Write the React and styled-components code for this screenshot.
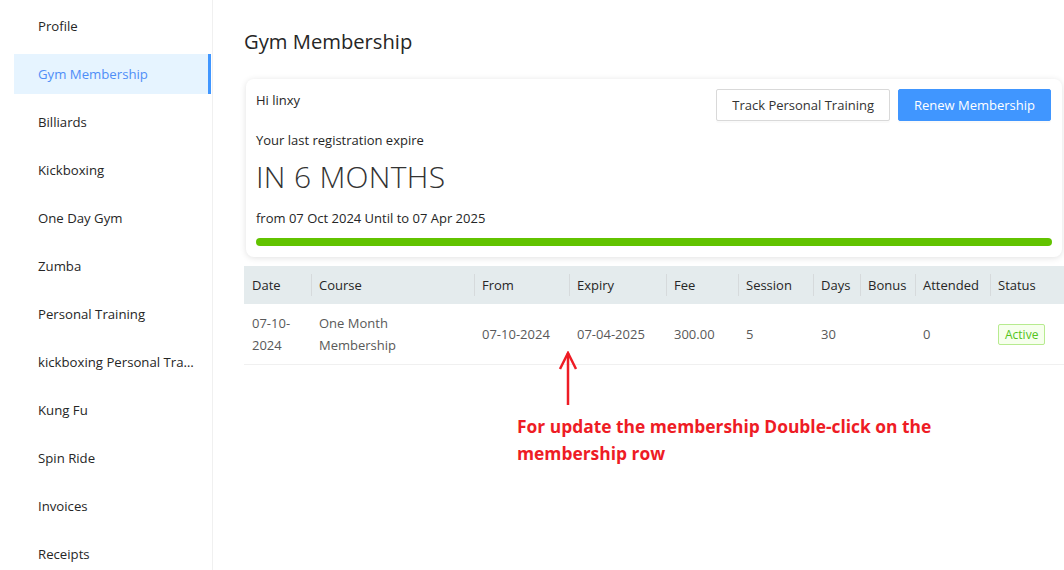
import React from "react";
import styled, { createGlobalStyle } from "styled-components";

const GlobalStyle = createGlobalStyle`
  html, body {
    margin: 0;
    padding: 0;
    background: #fff;
    font-family: "Open Sans", "Noto Sans", sans-serif;
    color: #262626;
  }
`;

const Page = styled.div`
  display: flex;
  width: 1064px;
  height: 570px;
  overflow: hidden;
`;

const Sidebar = styled.nav`
  width: 213px;
  flex-shrink: 0;
  border-right: 1px solid #f0f0f0;
  padding: 6px 0 0 14px;
  box-sizing: border-box;
  display: flex;
  flex-direction: column;
  gap: 8px;
`;

const MenuItem = styled.div`
  flex-shrink: 0;
  height: 40px;
  line-height: 40px;
  padding: 0 14px 0 24px;
  font-size: 13.2px;
  white-space: nowrap;
  overflow: hidden;
  text-overflow: ellipsis;
  color: ${(p) => (p.$active ? "#4f8ef7" : "#262626")};
  background: ${(p) => (p.$active ? "#e6f4ff" : "transparent")};
  border-right: 3px solid ${(p) => (p.$active ? "#4096ff" : "transparent")};
  margin-right: 1px;
`;

const Content = styled.main`
  flex: 1;
  padding: 27px 0 0 31px;
  min-width: 0;
`;

const Title = styled.h1`
  margin: 0 0 24px;
  font-size: 20.2px;
  font-weight: 400;
  color: #262626;
`;

const Card = styled.section`
  margin: 0 2px 9px 2px;
  padding: 10px 10px 11px 10px;
  border-radius: 8px;
  box-shadow: 0 1px 6px rgba(0, 0, 0, 0.12);
  display: flex;
  flex-direction: column;
`;

const CardTop = styled.div`
  display: flex;
  justify-content: space-between;
  align-items: flex-start;
`;

const Greeting = styled.div`
  font-size: 13px;
  padding-top: 2px;
`;

const Actions = styled.div`
  display: flex;
  gap: 8px;
  margin-right: 1px;
`;

const Button = styled.button`
  height: 32px;
  padding: 0 15px;
  font-family: inherit;
  font-size: 13px;
  border-radius: 2px;
  border: 1px solid ${(p) => (p.$primary ? "#4096ff" : "#d9d9d9")};
  background: ${(p) => (p.$primary ? "#4096ff" : "#fff")};
  color: ${(p) => (p.$primary ? "#fff" : "#333")};
  box-shadow: 0 2px 0 rgba(0, 0, 0, 0.02);
`;

const Line = styled.div`
  font-size: 13px;
  margin-top: ${(p) => p.$top || 0}px;
`;

const Big = styled.div`
  font-size: 30px;
  font-weight: 300;
  letter-spacing: 0.3px;
  margin-top: 7px;
  color: #333;
`;

const Progress = styled.div`
  height: 8px;
  border-radius: 4px;
  background: #62c300;
  margin-top: 11px;
`;

const Table = styled.table`
  border-collapse: collapse;
  table-layout: fixed;
  width: 830px;
  font-size: 13px;
`;

const Th = styled.th`
  position: relative;
  background: #e4ebed;
  height: 38px;
  padding: 0 8px;
  text-align: left;
  font-weight: 500;
  color: #262626;
  &:not(:first-child)::before {
    content: "";
    position: absolute;
    left: 0;
    top: 8px;
    height: 22px;
    width: 1px;
    background: #d6dadc;
  }
`;

const Td = styled.td`
  padding: 8px 8px;
  line-height: 22px;
  color: #595959;
  border-bottom: 1px solid #f0f0f0;
  vertical-align: middle;
`;

const Wrap = styled.div`
  max-width: ${(p) => p.$max}px;
`;

const Tag = styled.span`
  display: inline-block;
  padding: 0 6px;
  line-height: 19px;
  font-size: 12px;
  border: 1px solid #b7eb8f;
  background: #f6ffed;
  color: #52c41a;
  border-radius: 2px;
`;

const Hint = styled.div`
  display: flex;
  flex-direction: column;
  margin-left: 273px;
`;

const Arrow = styled.svg`
  margin-left: 41px;
  margin-top: -14px;
`;

const HintText = styled.p`
  margin: 8px 0 0;
  width: 450px;
  color: #ee1c25;
  font-weight: 700;
  font-size: 17.4px;
  line-height: 27px;
`;

const menu = [
  "Profile",
  "Gym Membership",
  "Billiards",
  "Kickboxing",
  "One Day Gym",
  "Zumba",
  "Personal Training",
  "kickboxing Personal Training",
  "Kung Fu",
  "Spin Ride",
  "Invoices",
  "Receipts",
];

const columns = [
  ["Date", 67],
  ["Course", 163],
  ["From", 95],
  ["Expiry", 97],
  ["Fee", 72],
  ["Session", 75],
  ["Days", 47],
  ["Bonus", 55],
  ["Attended", 75],
  ["Status", 84],
];

export default function App() {
  return (
    <Page>
      <GlobalStyle />
      <Sidebar>
        {menu.map((m) => (
          <MenuItem key={m} $active={m === "Gym Membership"}>
            {m}
          </MenuItem>
        ))}
      </Sidebar>
      <Content>
        <Title>Gym Membership</Title>
        <Card>
          <CardTop>
            <Greeting>Hi linxy</Greeting>
            <Actions>
              <Button>Track Personal Training</Button>
              <Button $primary>Renew Membership</Button>
            </Actions>
          </CardTop>
          <Line $top={10}>Your last registration expire</Line>
          <Big>IN 6 MONTHS</Big>
          <Line $top={12}>from 07 Oct 2024 Until to 07 Apr 2025</Line>
          <Progress />
        </Card>
        <Table>
          <colgroup>
            {columns.map(([c, w]) => (
              <col key={c} style={{ width: w }} />
            ))}
          </colgroup>
          <thead>
            <tr>
              {columns.map(([c]) => (
                <Th key={c}>{c}</Th>
              ))}
            </tr>
          </thead>
          <tbody>
            <tr>
              <Td>07-10-2024</Td>
              <Td>
                <Wrap $max={110}>One Month Membership</Wrap>
              </Td>
              <Td>07-10-2024</Td>
              <Td>07-04-2025</Td>
              <Td>300.00</Td>
              <Td>5</Td>
              <Td>30</Td>
              <Td></Td>
              <Td>0</Td>
              <Td>
                <Tag>Active</Tag>
              </Td>
            </tr>
          </tbody>
        </Table>
        <Hint>
          <Arrow width="20" height="54" viewBox="0 0 20 54">
            <path d="M10 2 L10 54" stroke="#ee1c25" strokeWidth="2.5" />
            <path d="M2 18 L10 2 L18 18" stroke="#ee1c25" strokeWidth="2.5" fill="none" />
          </Arrow>
          <HintText>For update the membership Double-click on the membership row</HintText>
        </Hint>
      </Content>
    </Page>
  );
}
